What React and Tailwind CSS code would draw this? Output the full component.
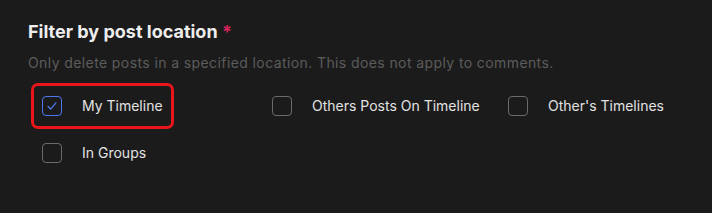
import React, { useState } from 'react';

const options = [
  { id: 'my', label: 'My Timeline' },
  { id: 'others-posts', label: 'Others Posts On Timeline' },
  { id: 'others-timelines', label: "Other's Timelines" },
  { id: 'groups', label: 'In Groups' },
];

const CheckItem = ({ label, checked, highlighted, onToggle }) => (
  <label
    className={`flex items-center gap-5 rounded-[7px] border-[3px] px-2 py-[10px] cursor-pointer w-fit ${
      highlighted ? 'border-[#e8161b]' : 'border-transparent'
    }`}
  >
    <button
      type="button"
      onClick={onToggle}
      className={`flex h-5 w-5 items-center justify-center rounded-[4px] border bg-transparent ${
        checked ? 'border-[#4f78f0]' : 'border-[#6a6a6a]'
      }`}
    >
      {checked && (
        <svg viewBox="0 0 16 16" className="h-[14px] w-[14px]" fill="none" stroke="#4f78f0" strokeWidth="1.5" strokeLinecap="round" strokeLinejoin="round">
          <path d="M3.5 8.5l3 3 6-7" />
        </svg>
      )}
    </button>
    <span className="text-[14px] leading-5 text-[#e2e2e2]">{label}</span>
  </label>
);

export default function App() {
  const [checked, setChecked] = useState({ my: true });

  const toggle = (id) => setChecked((c) => ({ ...c, [id]: !c[id] }));

  return (
    <div
      className="h-[213px] w-[712px] bg-[#1b1b1b] pl-7 pt-[20px]"
      style={{ fontFamily: 'Inter, "Noto Sans", sans-serif' }}
    >
      <h2 className="text-[18px] font-bold leading-6 text-[#ededed]">
        Filter by post location <span className="text-[#d2245a]">*</span>
      </h2>
      <p className="mt-[9px] text-[14px] leading-5 tracking-[0.4px] text-[#5c5c5c]">
        Only delete posts in a specified location. This does not apply to comments.
      </p>
      {/* location options */}
      <div className="ml-[3px] mt-[10px] grid grid-cols-[230px_236px_1fr] gap-y-[1px]">
        {options.map((o) => (
          <CheckItem
            key={o.id}
            label={o.label}
            checked={!!checked[o.id]}
            highlighted={o.id === 'my'}
            onToggle={() => toggle(o.id)}
          />
        ))}
      </div>
    </div>
  );
}
